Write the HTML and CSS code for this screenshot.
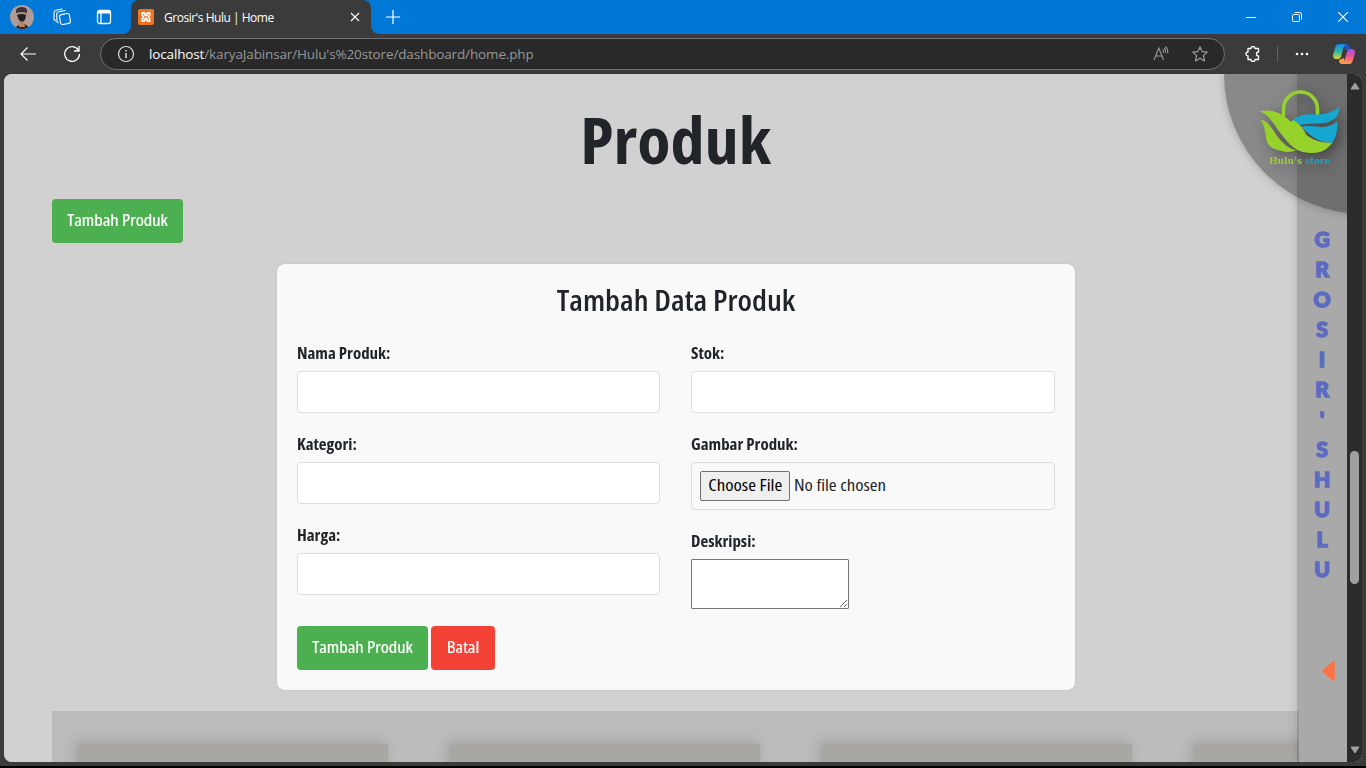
FILE: index.html
```html
<!DOCTYPE html>
<html lang="id">
<head>
<meta charset="utf-8">
<title>Grosir's Hulu | Home</title>
<link rel="stylesheet" href="styles.css">
</head>
<body>
<header class="titlebar">
  <svg class="avatar" width="24" height="24" viewBox="0 0 24 24"><defs><clipPath id="av"><circle cx="12" cy="12" r="12"/></clipPath></defs><g clip-path="url(#av)"><rect width="24" height="24" fill="#b09c97"/><path d="M5 24q1-3 4-4l5-1q4 1 5 5z" fill="#2b2526"/><path d="M9 16h5l1 6H9z" fill="#b98468"/><ellipse cx="11.500" cy="10" rx="5" ry="6" fill="#b58973"/><path d="M6 8q-1-6 6-6 6 0 5 6-5-2-11 0z" fill="#39313c"/><path d="M7 10q4-2 9 0l-1 5q-3 3-6 0z" fill="#202025"/></g></svg>
  <svg class="workspaces" width="18" height="18" viewBox="0 0 18 18" fill="none" stroke="#fff" stroke-width="1.100"><rect x="7" y="6" width="10" height="10" rx="2" transform="rotate(-10 12 11)"/><path d="M5.500 15 4 14 3.700 6q0-2 2-2.300l6.800-1.200M2.500 13 1 11.500V4.500q0-2 2-2.300L9.500 1"/></svg>
  <svg class="tabs-icon" width="16" height="16" viewBox="0 0 16 16" fill="none" stroke="#fff" stroke-width="1.300"><rect x="1.500" y="1.500" width="13" height="13" rx="2"/><path d="M2 3h12" stroke-width="3"/><path d="M5 4v10"/></svg>
  <div class="tab">
    <svg width="16" height="16" viewBox="0 0 16 16"><rect width="16" height="16" rx="2" fill="#ee7423"/><path d="M4.300 3.800h1.500q1.200 0 1.200 1.200v1.500h2V5q0-1.200 1.200-1.200h1.500v2.500L10.500 8l1.200 1.700v2.500h-1.500Q9 12.200 9 11V9.500H7V11q0 1.200-1.200 1.200H4.300V9.700L5.500 8 4.300 6.300z" fill="none" stroke="#fff" stroke-width="1.700" stroke-linejoin="round"/></svg>
    <span class="tab-title">Grosir's Hulu | Home</span>
    <svg class="tab-close" width="10" height="10" viewBox="0 0 10 10" stroke="#fff" stroke-width="1.100"><path d="m1 1 8 8M9 1 1 9"/></svg>
  </div>
  <svg class="new-tab" width="14" height="14" viewBox="0 0 14 14" stroke="#fff" stroke-width="1.200"><path d="M7 0v14M0 7h14"/></svg>
  <div class="window-controls">
    <svg width="10" height="10" viewBox="0 0 10 10" stroke="#fff"><path d="M0 5.500h10"/></svg>
    <svg width="10" height="10" viewBox="0 0 10 10" fill="none" stroke="#fff"><rect x=".5" y="2.500" width="7" height="7" rx="1"/><path d="M2.500.5h5q2 0 2 2v5"/></svg>
    <svg width="10" height="10" viewBox="0 0 10 10" stroke="#fff" stroke-width="1.100"><path d="m0 0 10 10M10 0 0 10"/></svg>
  </div>
</header>
<nav class="toolbar">
  <svg class="back" width="16" height="14" viewBox="0 0 16 14" fill="none" stroke="#fff" stroke-width="1.200"><path d="M16 7H1M7.500.5 1 7l6.500 6.500"/></svg>
  <svg class="reload" width="18" height="18" viewBox="0 0 18 18" fill="none" stroke="#fff" stroke-width="1.300"><path d="M15.500 5.300A7.400 7.400 0 1 0 16.500 9M16 1v5h-5"/></svg>
  <div class="address">
    <svg width="18" height="18" viewBox="0 0 18 18" fill="none" stroke="#ddd" stroke-width="1.200"><circle cx="9" cy="9" r="7.500"/><path d="M9 8v5M9 5v1.600" stroke-width="1.500"/></svg>
    <span class="url"><b>localhost</b>/karyaJabinsar/Hulu's%20store/dashboard/home.php</span>
    <svg class="read" width="16" height="16" viewBox="0 0 16 16" fill="none" stroke="#999" stroke-width="1.100"><path d="m1 14 4.800-12L10.500 14M2.800 10h6M9.500 3.500q1.300 1.500.8 3.500M11 2q2.300 2 1.500 5M12.500.5q3.300 3 2 6.800"/></svg>
    <svg class="star" width="16" height="16" viewBox="0 0 16 16" fill="none" stroke="#999" stroke-width="1.200" stroke-linejoin="round"><path d="m8 .8 2.100 4.800 5.200.5-3.900 3.500 1.100 5.300L8 12.200l-4.500 2.700 1.100-5.300L.7 6.100l5.200-.5z"/></svg>
  </div>
  <svg class="extensions" width="16" height="16" viewBox="0 0 16 16" fill="none" stroke="#fff" stroke-width="1.300" stroke-linejoin="round"><path d="M3 2.500h3a2 2 0 0 1 4 0h3.500V6a2 2 0 0 0 0 4v3.500H10a2 2 0 0 1-4 0H3V10a2 2 0 0 1 0-4z"/></svg>
  <span class="divider"></span>
  <svg class="more" width="14" height="4" viewBox="0 0 14 4" fill="#fff"><circle cx="2" cy="2" r="1.300"/><circle cx="7" cy="2" r="1.300"/><circle cx="12" cy="2" r="1.300"/></svg>
  <svg class="copilot" width="22" height="20" viewBox="0 0 22 20"><defs><linearGradient id="c1" x2="0" y2="1"><stop stop-color="#168bea"/><stop offset=".55" stop-color="#32bba0"/><stop offset="1" stop-color="#f4cf22"/></linearGradient><linearGradient id="c2" x2="0" y2="1"><stop stop-color="#a44cf0"/><stop offset=".5" stop-color="#ed568c"/><stop offset="1" stop-color="#ff9e4a"/></linearGradient></defs><path d="M10 0h3q3 0 4 4l1 2h-5z" fill="#1c55d0"/><path d="M12 20H9q-3 0-3-4l5-2z" fill="#fb9a43"/><path d="M6 0h7q-2 1-3 5l-2 8q-1 2-3 2H3q-3 0-3-4L2 4q1-4 4-4z" fill="url(#c1)"/><path d="M16 20H9q2-1 3-5l2-7q1-3 3-3h2q3 0 3 4l-2 7q-1 4-4 4z" fill="url(#c2)"/></svg>
</nav>
<div class="browser-body">
  <div class="page">
    <main class="content">
      <h1 class="page-title"><span class="fit fit-title">Produk</span></h1>
      <button class="btn btn-add"><span class="fit fit-btn">Tambah Produk</span></button>
      <form class="form-card">
        <h2 class="form-title"><span class="fit fit-heading">Tambah Data Produk</span></h2>
        <div class="columns">
          <div class="column">
            <label class="field"><span class="fit fit-label">Nama Produk:</span><input class="input" type="text"></label>
            <label class="field"><span class="fit fit-label">Kategori:</span><input class="input" type="text"></label>
            <label class="field"><span class="fit fit-label">Harga:</span><input class="input" type="text"></label>
          </div>
          <div class="column">
            <label class="field"><span class="fit fit-label">Stok:</span><input class="input" type="text"></label>
            <div class="field"><span class="fit fit-label">Gambar Produk:</span>
              <div class="file"><span class="choose"><span class="fit fit-file">Choose File</span></span><span class="fit fit-file file-name">No file chosen</span></div></div>
            <label class="field"><span class="fit fit-label">Deskripsi:</span><textarea class="area"></textarea></label>
          </div>
        </div>
        <div class="actions"><button class="btn btn-add"><span class="fit fit-btn">Tambah Produk</span></button><button class="btn btn-cancel"><span class="fit fit-btn">Batal</span></button></div>
      </form>
      <section class="products"><div class="product"></div><div class="product"></div><div class="product"></div><div class="product"></div></section>
    </main>
    <aside class="rail">
      <div class="letters"><span>G</span><span>R</span><span>O</span><span>S</span><span>I</span><span>R</span><span>'</span><span>S</span><span>H</span><span>U</span><span>L</span><span>U</span></div>
      <svg class="arrow" width="13" height="20" viewBox="0 0 13 20"><path d="M11.500 1.500v17L1.500 10z" fill="#ff7043" stroke="#ff7043" stroke-width="2.500" stroke-linejoin="round"/></svg>
    </aside>
    <div class="corner"></div>
    <svg class="logo" width="82" height="78" viewBox="0 0 82 78">
      <path d="M24.500 27.500V20a17 17 0 0 1 34 0v7" fill="none" stroke="#97d12b" stroke-width="3.600"/>
      <path d="M34 31C42 25 49 25 55 25.500C66 26 74 23 80.500 17.500Q80 25 76.500 29Q70 34.500 59 34.500Q48 34 40 36z" fill="#16a7d1"/>
      <path d="M42 37.500Q50 36.500 62 38Q72 38 78.500 32Q79 46 73 54Q57 54 42 37.500z" fill="#16a7d1"/>
      <path d="M1 22C12 20 20 23 27.500 29C36 36 42 42 48 46.500Q60 55 73.500 53.500Q68 61 61 63Q53 65 44 63C35 61 28 53 19 41Q10 26 1 22z" fill="#97d12b"/>
      <path d="M34 31Q42 35 48 46.500L30 34z" fill="#97d12b"/>
      <path d="M1 31Q6 31 9.500 35Q13 39 18 47Q27 59 37 61.500Q30 64 23 62Q11 60 8.500 54C6 49 7 36 1 31z" fill="#97d12b"/>
      <text class="brand" x="10" y="74.500" textLength="33" lengthAdjust="spacingAndGlyphs" fill="#97d12b">Hulu's</text>
      <text class="brand" x="46" y="74.500" textLength="25" lengthAdjust="spacingAndGlyphs" fill="#16a7d1">store</text>
    </svg>
  </div>
  <div class="scrollbar">
    <svg width="10" height="8" viewBox="0 0 10 8"><path d="M5 1 9 7H1z" fill="#9f9f9f" stroke="#9f9f9f" stroke-linejoin="round"/></svg>
    <div class="thumb"></div>
    <svg width="10" height="8" viewBox="0 0 10 8"><path d="M5 7 9 1H1z" fill="#9f9f9f" stroke="#9f9f9f" stroke-linejoin="round"/></svg>
  </div>
</div>
</body>
</html>
```
FILE: styles.css
```css
* { box-sizing: border-box; }
body { margin: 0; width: 1366px; height: 768px; overflow: hidden; background: #3b3b3b; border-bottom: 2px solid #000; font-family: "Open Sans", "Noto Sans", sans-serif; color: #212529; display: flex; flex-direction: column; }
svg { display: block; flex: none; }
.titlebar { height: 34px; flex: none; background: #0078d7; display: flex; align-items: center; color: #fff; padding-left: 10px; }
.workspaces { margin-left: 19px; }
.tabs-icon { margin-left: 25px; }
.tab { margin-left: 19px; width: 240px; height: 34px; background: #3b3b3b; border-radius: 8px 8px 0 0; display: flex; align-items: center; padding: 0 11px 0 7px; position: relative; }
.tab::before, .tab::after { content: ""; position: absolute; bottom: 0; width: 8px; height: 8px; }
.tab::before { left: -8px; background: radial-gradient(circle at 0 0, transparent 7.500px, #3b3b3b 8px); }
.tab::after { right: -8px; background: radial-gradient(circle at 100% 0, transparent 7.500px, #3b3b3b 8px); }
.tab-title { margin-left: 10px; font-size: 12px; letter-spacing: -.48px; flex: 1; white-space: nowrap; }
.new-tab { margin-left: 15px; }
.window-controls { margin-left: auto; display: flex; gap: 36px; padding-right: 18px; }
.toolbar { height: 40px; flex: none; display: flex; align-items: center; padding-left: 20px; }
.reload { margin-left: 27px; }
.address { margin-left: 19px; width: 1125px; height: 32px; border: 1px solid #707070; border-radius: 16px; background: #292929; display: flex; align-items: center; padding: 0 16px; }
.url { flex: 1; margin-left: 14px; font-size: 13.500px; letter-spacing: -.14px; color: #979797; white-space: nowrap; }
.url b { color: #fff; font-weight: 400; }
.star { margin-left: 23px; }
.extensions { margin-left: 20px; }
.divider { width: 1px; height: 16px; background: #626262; margin-left: 16px; }
.more { margin-left: 17px; }
.copilot { margin-left: 24px; }
.browser-body { margin: 0 4px; height: 688px; display: flex; border-radius: 8px; overflow: hidden; background: #d1d1d1; }
.page { width: 1343px; height: 688px; position: relative; overflow: hidden; background: #d1d1d1; }
.content { width: 1295px; padding: 30px 0 0 48px; }
.fit { display: inline-block; white-space: nowrap; font-stretch: 75%; }
.fit-title { transform: scaleX(1.065); }
.fit-heading { transform: scaleX(1.115); }
.fit-label { transform: scaleX(1.055); transform-origin: 0 50%; }
.fit-btn { transform: scaleX(1.155); -webkit-text-stroke: .2px #fff; }
.fit-file { transform: translateY(-1px) scaleX(1.18); }
.file-name { transform-origin: 0 50%; }
.page-title { margin: 0; height: 75px; font-size: 64px; line-height: 72px; font-weight: 700; text-align: center; }
.btn { border: 0; border-radius: 4px; height: 44px; padding: 0 0 2px; color: #fff; font: 500 16px "Open Sans", sans-serif; display: flex; align-items: center; justify-content: center; }
.btn-add { width: 131px; background: #4caf50; }
.content > .btn-add { margin-top: 20px; }
.btn-cancel { width: 64px; background: #f44336; }
.form-card { margin: 21px auto 0 225px; width: 798px; height: 426px; padding: 20px; background: #f9f9f9; border-radius: 8px; box-shadow: 0 0 2px rgba(0,0,0,.13); }
.form-title { margin: 0; height: 34px; line-height: 32px; text-align: center; font-size: 28px; font-weight: 600; }
.columns { display: grid; grid-template-columns: 363px 364px; gap: 31px; margin-top: 24px; height: 284px; }
.field { display: flex; flex-direction: column; align-items: flex-start; margin-bottom: 20px; font-size: 16px; font-weight: 700; line-height: 22px; }
.field > .fit { margin-bottom: 7px; }
.input { width: 100%; height: 42px; border: 1px solid #ddd; border-radius: 4px; background: #fff; }
.file { width: 100%; height: 48px; border: 1px solid #ddd; border-radius: 4px; display: flex; align-items: center; padding-left: 8px; gap: 4px; font-weight: 400; }
.choose { width: 90px; height: 30px; border: 1px solid #6f6f6f; border-radius: 2px; background: #efefef; color: #000; display: flex; align-items: center; justify-content: center; }
.area { width: 158px; height: 50px; border: 1px solid #767676; border-radius: 1px; background: #fff; resize: both; }
.actions { display: flex; gap: 3px; }
.products { margin-top: 21px; height: 200px; width: 1247px; overflow: hidden; background: #bbb; display: flex; gap: 62px; padding: 33px 26px 0; }
.product { flex: none; width: 310px; height: 180px; border-radius: 8px 0 0 0; background: #a8a7a2; box-shadow: -5px -5px 10px rgba(90,90,90,.17), 2px 0 7px rgba(90,90,90,.08); }
.rail { position: absolute; right: 0; top: 0; width: 50px; height: 688px; background: rgba(0,0,0,.19); box-shadow: 0 0 9px rgba(0,0,0,.15); padding-top: 150px; }
.letters { display: flex; flex-direction: column; align-items: center; color: #5c6bc0; font: 900 21px/30px Lato, sans-serif; -webkit-text-stroke: 1.500px #5c6bc0; }
.arrow { margin: 77px 0 0 25px; }
.corner { position: absolute; right: -17px; top: 0; width: 140px; height: 140px; border-radius: 0 0 0 140px; background: rgba(0,0,0,.34); box-shadow: 0 0 9px rgba(0,0,0,.25); }
.logo { position: absolute; left: 1255px; top: 15px; filter: drop-shadow(4px 4px 7px rgba(0,0,0,.4)); }
.brand { font: 700 10px "DejaVu Serif", serif; }
.scrollbar { width: 15px; background: #2b2b2b; display: flex; flex-direction: column; align-items: center; padding: 8px 0; }
.thumb { width: 9px; height: 133px; border-radius: 5px; background: #9f9f9f; margin: 361px 0 auto; }
```
